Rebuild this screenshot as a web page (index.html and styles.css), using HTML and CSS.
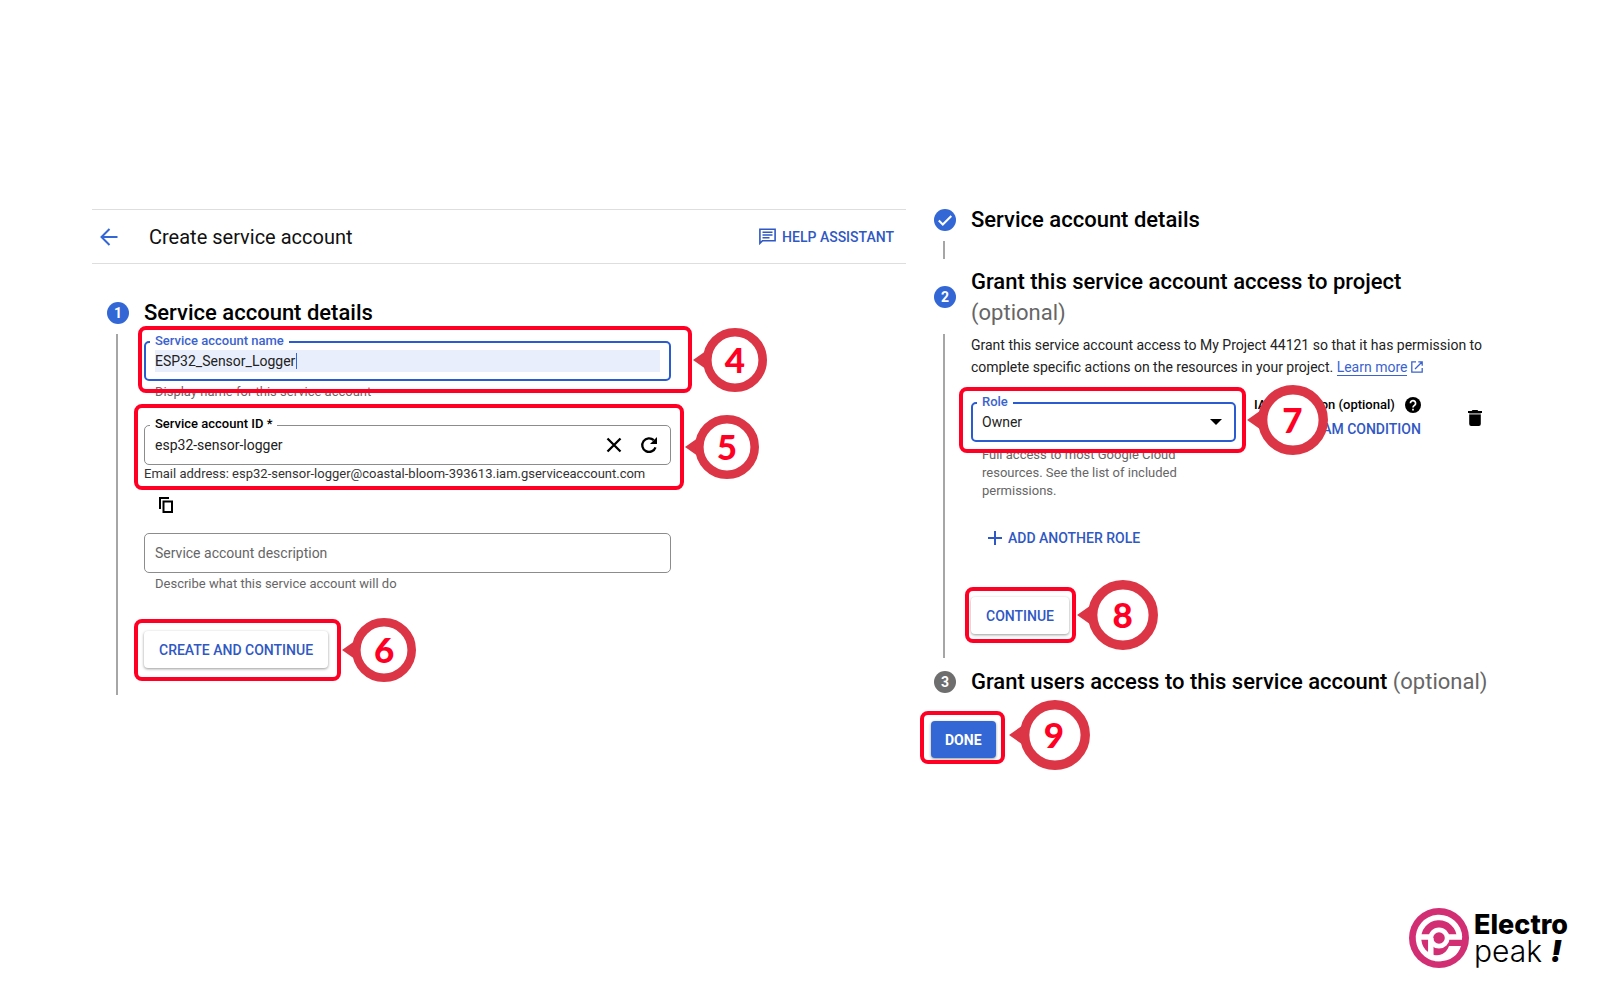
FILE: index.html
```html
<!DOCTYPE html>
<html lang="en">
<head>
<meta charset="utf-8">
<title>Create service account</title>
<link rel="stylesheet" href="styles.css">
</head>
<body>
<svg class="defs" aria-hidden="true">
  <symbol id="pin" viewBox="0 0 74 64">
    <path fill="#dc3545" d="M0 32 15 21.500V42.500Z"/>
    <circle cx="42" cy="32" r="27.700" fill="#fff" stroke="#dc3545" stroke-width="8.600"/>
  </symbol>
</svg>

<main class="panels">
  <section class="panel">
    <header class="topbar">
      <a class="back" href="#" aria-label="Back">
        <svg width="18" height="18" viewBox="0 0 18 18" fill="none" stroke="currentColor" stroke-width="2"><path d="M17.500 9H2M9.500 1 1.500 9l8 8"/></svg>
      </a>
      <h1 class="title">Create service account</h1>
      <button class="text-button help" type="button">
        <svg width="17" height="17" viewBox="0 0 17 17" fill="none" stroke="currentColor"><path stroke-width="1.600" d="M.9 15.300V1.300h15.200v11.400H3.500Z"/><path stroke-width="1.400" d="M3.500 4.300h10M3.500 7h10M3.500 9.700h7"/></svg>
        HELP ASSISTANT
      </button>
    </header>

    <form class="steps">
      <div class="step-head">
        <span class="badge">1</span>
        <h2 class="step-title">Service account details</h2>
      </div>
      <div class="step-body first">
        <div class="fields">
          <div class="field active">
            <label class="label" for="name">Service account name</label>
            <input class="input filled" id="name" type="text" value="ESP32_Sensor_Logger">
            <span class="caret"></span>
            <div class="frame frame-name"><span class="callout"><svg><use href="#pin"/></svg><b>4</b></span></div>
          </div>
          <p class="hint">Display name for this service account</p>

          <div class="field account-id">
            <label class="label" for="account">Service account ID *</label>
            <input class="input" id="account" type="text" value="esp32-sensor-logger">
            <button class="icon-button" type="button" aria-label="Clear">
              <svg width="16" height="16" viewBox="0 0 16 16" fill="none" stroke="currentColor" stroke-width="2.300"><path d="M1.500 1.500l13 13M14.500 1.500l-13 13"/></svg>
            </button>
            <button class="icon-button" type="button" aria-label="Regenerate">
              <svg width="18" height="18" viewBox="0 0 18 18" fill="none" stroke="currentColor" stroke-width="2.300"><path d="M15.500 11.300A6.800 6.800 0 1 1 13.800 4.200"/><path fill="currentColor" stroke="none" d="M17 1v7h-7Z"/></svg>
            </button>
            <div class="frame frame-id"><span class="callout"><svg><use href="#pin"/></svg><b>5</b></span></div>
          </div>
          <p class="email">Email address: esp32-sensor-logger@coastal-bloom-393613.iam.gserviceaccount.com</p>
          <button class="icon-button copy" type="button" aria-label="Copy email address">
            <svg width="14" height="16" viewBox="0 0 14 16" fill="none" stroke="currentColor" stroke-width="2"><path d="M1 12V1h9M4.500 4.500H13V15H4.500Z"/></svg>
          </button>

          <div class="field description">
            <input class="input" type="text" placeholder="Service account description" aria-label="Service account description">
          </div>
          <p class="hint">Describe what this service account will do</p>

          <div class="action create">
            <button class="button" type="button">CREATE AND CONTINUE</button>
            <div class="frame frame-create"><span class="callout"><svg><use href="#pin"/></svg><b>6</b></span></div>
          </div>
        </div>
      </div>
    </form>
  </section>

  <section class="panel-right">
    <form class="steps-right">
      <div class="step-head">
        <span class="badge"><svg width="16" height="16" viewBox="0 0 16 16" fill="none" stroke="currentColor" stroke-width="2"><path d="M1.800 8.500l4 4L14.300 4"/></svg></span>
        <h2 class="step-title">Service account details</h2>
      </div>
      <div class="step-body short"></div>

      <div class="step-head">
        <span class="badge">2</span>
        <h2 class="step-title">Grant this service account access to project <span class="optional own-line">(optional)</span></h2>
      </div>
      <div class="step-body">
        <div class="grant">
          <p class="intro">Grant this service account access to My Project 44121 so that it has permission to complete specific actions on the resources in your project. <a class="link" href="#">Learn more</a> <svg class="external" width="12" height="12" viewBox="0 0 12 12" fill="none" stroke="currentColor" stroke-width="1.300"><path d="M5 .8H.8v10.400h10.400V7M7.300.8h3.900v3.900M11 1 4 8"/></svg></p>

          <div class="role-row">
            <div class="field active role">
              <label class="label" for="role">Role</label>
              <select class="input" id="role"><option>Owner</option></select>
              <svg class="arrow" width="12" height="6" viewBox="0 0 12 6"><path d="M0 0h12L6 6Z"/></svg>
              <div class="frame frame-role"><span class="callout large"><svg><use href="#pin"/></svg><b>7</b></span></div>
            </div>
            <div class="condition">
              <div class="condition-label">IAM condition (optional)
                <svg width="16" height="16" viewBox="0 0 16 16"><circle cx="8" cy="8" r="8"/><path fill="none" stroke="#fff" stroke-width="1.700" d="M5.400 6.300a2.600 2.600 0 1 1 4.300 1.900C8.600 9 8 9.300 8 10.600M8 11.800v1.700"/></svg>
              </div>
              <button class="text-button" type="button">ADD IAM CONDITION</button>
            </div>
            <button class="icon-button trash" type="button" aria-label="Delete role">
              <svg width="14" height="16" viewBox="0 0 14 16" fill="currentColor"><path d="M4.500 0h5l.8 1H14v2H0V1h3.700Z"/><path fill="#8a8a8a" d="M1.200 3h11.600v1.500H1.200Z"/><path d="M1.200 4.500h11.600V14a2 2 0 0 1-2 2H3.200a2 2 0 0 1-2-2Z"/></svg>
            </button>
          </div>
          <p class="hint role-hint">Full access to most Google Cloud resources. See the list of included permissions.</p>

          <button class="text-button add-role" type="button">
            <svg width="14" height="14" viewBox="0 0 14 14" fill="none" stroke="currentColor" stroke-width="2"><path d="M7 0v14M0 7h14"/></svg>
            ADD ANOTHER ROLE
          </button>

          <div class="action continue">
            <button class="button" type="button">CONTINUE</button>
            <div class="frame frame-continue"><span class="callout large"><svg><use href="#pin"/></svg><b>8</b></span></div>
          </div>
        </div>
      </div>

      <div class="step-head last">
        <span class="badge muted">3</span>
        <h2 class="step-title">Grant users access to this service account <span class="optional">(optional)</span></h2>
      </div>
      <div class="action done">
        <button class="button primary" type="button">DONE</button>
        <div class="frame frame-done"><span class="callout large"><svg><use href="#pin"/></svg><b>9</b></span></div>
      </div>
    </form>
  </section>
</main>

<footer class="brand">
  <svg width="60" height="60" viewBox="0 0 60 60" fill="none">
    <circle cx="30" cy="30" r="30" fill="#d12e74"/>
    <g stroke="#fff" stroke-width="5.500">
      <path d="M50.500 29.500A20.500 20.500 0 1 0 33 50.300"/>
      <path d="M10 29H23M37 29H53"/>
      <circle cx="30" cy="30" r="8.200" stroke-width="4.800"/>
      <path d="M21.800 30V49"/>
      <path fill="#fff" stroke="none" d="M52 38H40C38 43.500 34 47.500 26 47.500V53.200C40 54.500 49 48 52 38Z"/>
    </g>
  </svg>
  <div class="brand-name"><strong>Electro</strong><span>peak <em>!</em></span></div>
</footer>
</body>
</html>
```
FILE: styles.css
```css
* { box-sizing: border-box; }

body {
  margin: 0;
  min-height: 100vh;
  display: flex;
  flex-direction: column;
  background: #fff;
  color: #111;
  font: 14px/22px Roboto, "Liberation Sans", sans-serif;
}

h1, h2, p { margin: 0; }

button, input, select { font: inherit; color: inherit; }

button { border: 0; padding: 0; background: none; cursor: pointer; }

.defs { position: absolute; width: 0; height: 0; }

.panels {
  display: grid;
  grid-template-columns: 814fr 577fr;
  gap: 25px;
  padding: 204px 92px 40px;
}

.panel { padding-top: 5px; }

.topbar {
  display: flex;
  align-items: center;
  height: 55px;
  padding: 0 12px 0 8px;
  border-top: 1px solid #dedede;
  border-bottom: 1px solid #dedede;
}

.back { display: flex; color: #3367d6; }

.title {
  flex: 1;
  margin-left: 31px;
  font-size: 20px;
  font-weight: 400;
}

.text-button {
  display: flex;
  align-items: center;
  gap: 6px;
  color: #3058c4;
  font-weight: 500;
  line-height: 20px;
}

.steps { padding: 33px 0 0 15px; }
.steps-right { padding-left: 3px; }

.step-head, .step-body {
  display: grid;
  grid-template-columns: 22px 1fr;
  column-gap: 15px;
  align-items: center;
}

.step-title {
  font-size: 22px;
  font-weight: 500;
  line-height: 31px;
  color: #000;
}

.optional { color: #666; font-weight: 400; }
.own-line { display: block; }

.badge {
  display: grid;
  place-items: center;
  height: 22px;
  border-radius: 50%;
  background: #3367d6;
  color: #fff;
  font-weight: 700;
}

.badge.muted { background: #6e6e6e; }

/* The rail that joins one step to the next */
.step-body { margin-top: 6px; align-items: stretch; }
.step-body::before {
  content: "";
  width: 2px;
  margin-left: 9px;
  background: #a6a6a6;
}
.step-body.short { height: 18px; margin-bottom: 7px; }

.fields { max-width: 527px; padding: 7px 0 27px; }

.field {
  position: relative;
  display: flex;
  align-items: center;
  height: 40px;
  padding: 0 10px;
  border: 1px solid #8c8c8c;
  border-radius: 5px;
}

.field.active { border: 2px solid #2a5bd0; padding: 0 9px; }

.label {
  position: absolute;
  top: -10px;
  left: 5px;
  padding: 0 5px;
  background: #fff;
  color: #000;
  font-size: 13px;
  font-weight: 500;
  line-height: 16px;
}

.active .label { left: 4px; color: #3b63cf; }

.input {
  flex: 1;
  min-width: 0;
  height: 22px;
  padding: 0;
  border: 0;
  outline: 0;
  background: none;
  color: #222;
  appearance: none;
}

.input.filled { background: #e8eefb; }
.input::placeholder { color: #666; opacity: 1; }

.caret {
  position: absolute;
  left: 150px;
  width: 1px;
  height: 16px;
  background: #3367d6;
}

.hint {
  margin-top: 2px;
  padding-left: 11px;
  color: #666;
  font-size: 13px;
  line-height: 18px;
}

.account-id { margin-top: 24px; gap: 18px; }
.account-id .icon-button:last-of-type { margin-right: 2px; }

.email { font-size: 13px; line-height: 18px; color: #333; white-space: nowrap; }

.icon-button { display: flex; flex: none; color: #000; }
.copy { margin: 14px 0 20px 15px; }

.button {
  height: 37px;
  padding: 0 15px;
  border-radius: 4px;
  background: #fff;
  box-shadow: 0 1px 3px rgba(0, 0, 0, .4);
  color: #3058c4;
  font-weight: 500;
  white-space: nowrap;
}

.button.primary { padding: 0 14px; background: #3367d6; color: #fff; font-weight: 700; }

.action { position: relative; display: flex; width: max-content; }
.create { margin-top: 38px; }

.intro { color: #222; }
.link, .external { color: #3b63cf; }
.link { text-decoration: none; border-bottom: 1px solid; }
.external { vertical-align: -1px; }

.role-row { display: flex; align-items: center; margin-top: 24px; }
.role { flex: 0 0 265px; }
.arrow { margin-right: 3px; pointer-events: none; }

.condition {
  display: flex;
  flex-direction: column;
  align-items: flex-end;
  gap: 5px;
  margin: -10px 0 0 18px;
}
.condition-label {
  display: flex;
  align-items: center;
  gap: 10px;
  color: #000;
  font-size: 13px;
  font-weight: 500;
  line-height: 18px;
}
.trash { margin: -8px 0 0 47px; }

.role-hint { max-width: 230px; margin-top: 4px; }
.add-role { margin: 28px 0 0 17px; }
.continue { margin: 49px 0 24px; }
.last { margin-top: 8px; }
.done { margin: 24px 0 0 -3px; }

/* Red frames and numbered pins laid over the form */
.frame {
  position: absolute;
  z-index: 1;
  border: 4px solid #ff0024;
  border-radius: 8px;
  pointer-events: none;
}
.frame-name { inset: -17px -23px -14px -8px; }
.frame-id { inset: -22px -14px -26px -11px; }
.frame-create { inset: -12px -13px -13px -10px; }
.frame-role { inset: -17px -12px -13px -14px; }
.frame-continue { inset: -10px -7px -9px -6px; }
.frame-done { inset: -10px -9px -6px -11px; }

.callout {
  position: absolute;
  top: 50%;
  left: 100%;
  display: grid;
  width: 74px;
  height: 64px;
  margin: -32px 0 0 5px;
}
.callout.large { width: 81px; height: 70px; margin-top: -35px; }
.frame-done .callout { margin: -38px 0 0 8px; }
.callout svg, .callout b { grid-area: 1 / 1; width: 100%; height: 100%; }
.callout b {
  display: grid;
  place-items: center;
  padding: 0 0 2px 10px;
  color: #ff0024;
  font: 900 35px/36px Lato, sans-serif;
}

.brand {
  display: flex;
  align-items: center;
  gap: 5px;
  margin: auto 32px 32px auto;
}
.brand-name {
  display: flex;
  flex-direction: column;
  color: #000;
  font: 27px/26px Inter, sans-serif;
}
.brand-name strong { font-weight: 800; }
.brand-name span { font-size: 30px; font-weight: 300; }
.brand-name em { font-weight: 900; }
```
